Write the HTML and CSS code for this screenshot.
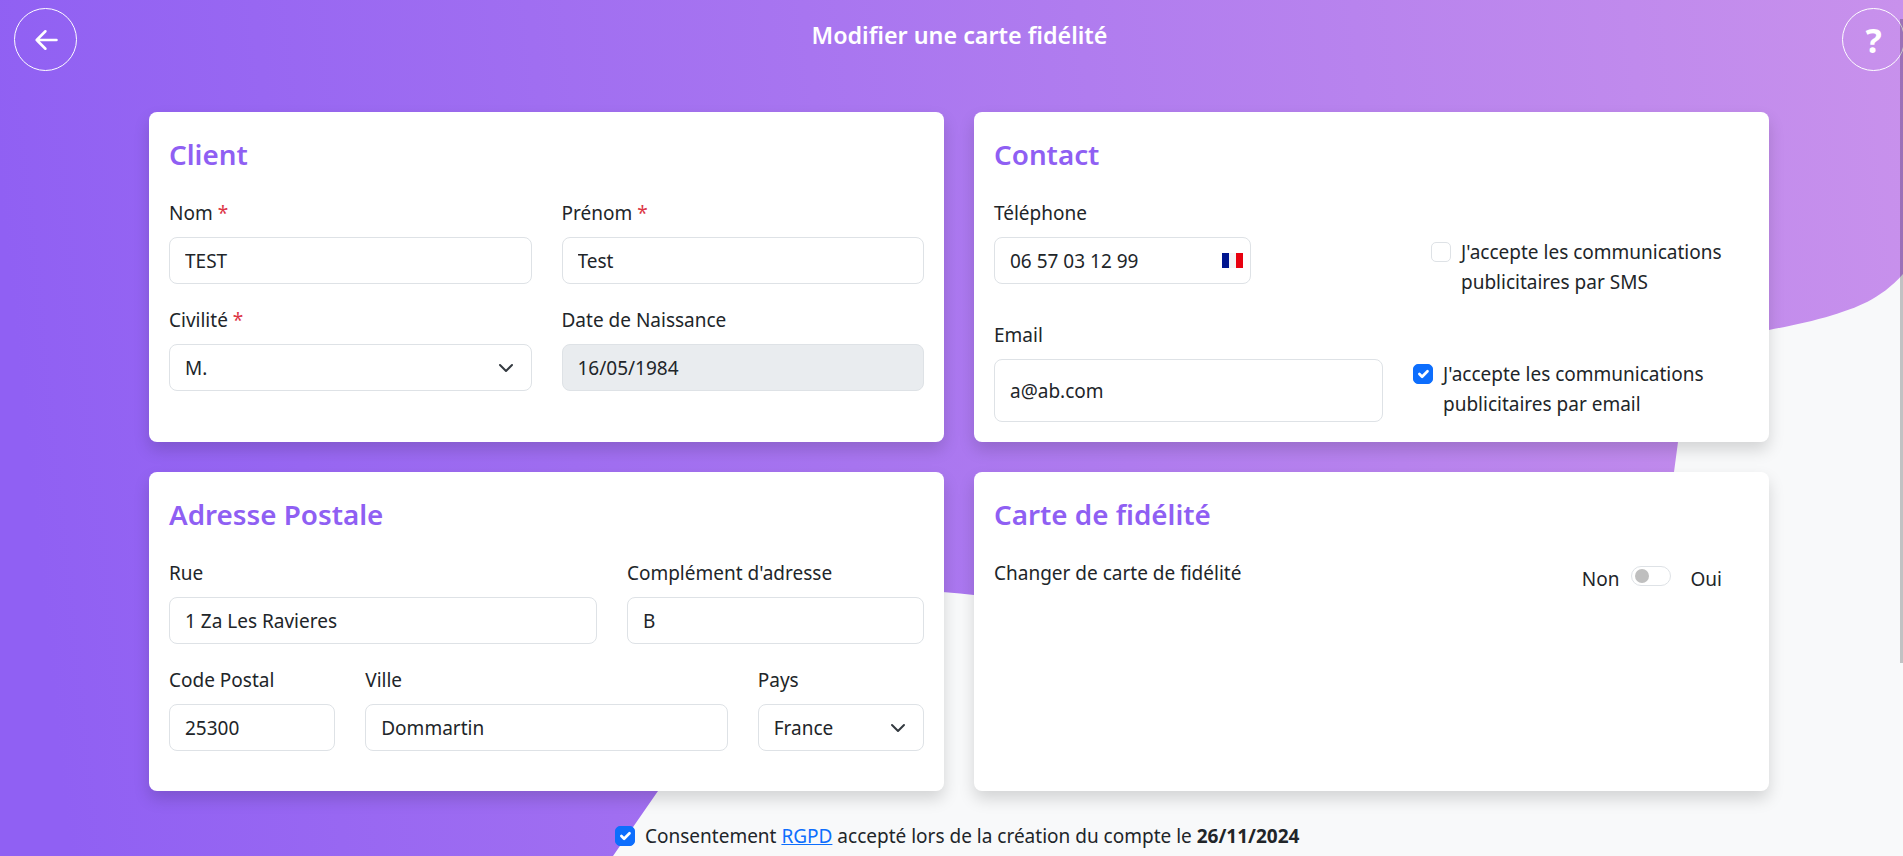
FILE: index.html
```html
<!DOCTYPE html>
<html lang="fr">
<head>
    <meta charset="utf-8">
    <title>Modifier une carte fidélité</title>
    <link rel="stylesheet" href="styles.css">
</head>
<body>
    <!-- decorative background -->
    <svg class="blob" width="1903" height="856" viewBox="0 0 1903 856">
        <defs>
            <linearGradient id="violet" gradientUnits="userSpaceOnUse" x1="0" y1="200" x2="1903" y2="0">
                <stop offset="0" stop-color="#9060f3"/>
                <stop offset="1" stop-color="#c891ec"/>
            </linearGradient>
        </defs>
        <path fill="url(#violet)" d="M0 0H1903V274C1880 300 1855 308 1833 315C1810 322 1790 326 1769 330C1705 344 1690 390 1678 442L1674 472C1660 540 1300 630 974 595C900 586 800 590 740 650C700 690 680 740 658 791L613 856H0Z"/>
    </svg>
    <div class="scrollbar"></div>

    <header class="topbar">
        <button class="round-btn" type="button" aria-label="Retour">
            <svg width="28" height="28" viewBox="0 0 24 24" fill="none" stroke="#fff" stroke-width="2.2" stroke-linecap="round" stroke-linejoin="round"><path d="M21 12H4M11.500 4.500L4 12l7.500 7.500"/></svg>
        </button>
        <h1 class="page-title">Modifier une carte fidélité</h1>
        <button class="round-btn help" type="button">?</button>
    </header>

    <main class="cards">
        <section class="card card-top">
            <h2>Client</h2>
            <div class="row">
                <div class="field c6"><label>Nom <span class="req">*</span></label><input class="ctl" type="text" value="TEST"></div>
                <div class="field c6"><label>Prénom <span class="req">*</span></label><input class="ctl" type="text" value="Test"></div>
                <div class="field c6"><label>Civilité <span class="req">*</span></label><select class="ctl"><option>M.</option></select></div>
                <div class="field c6"><label>Date de Naissance</label><input class="ctl" type="text" value="16/05/1984" disabled></div>
            </div>
        </section>

        <section class="card card-top">
            <h2>Contact</h2>
            <div class="contact">
                <div class="field">
                    <label>Téléphone</label>
                    <div class="phone">
                        <input class="ctl" type="text" value="06 57 03 12 99">
                        <svg class="flag" width="21" height="15" viewBox="0 0 21 15"><rect width="7" height="15" fill="#00158f"/><rect x="7" width="7" height="15" fill="#f4f4f6"/><rect x="14" width="7" height="15" fill="#e8000f"/></svg>
                    </div>
                </div>
                <label class="check sms"><input type="checkbox"><span>J'accepte les communications publicitaires par SMS</span></label>
                <div class="field email">
                    <label>Email</label>
                    <input class="ctl tall" type="text" value="a@ab.com">
                </div>
                <label class="check"><input type="checkbox" checked><span>J'accepte les communications publicitaires par email</span></label>
            </div>
        </section>

        <section class="card card-bottom">
            <h2>Adresse Postale</h2>
            <div class="row">
                <div class="field c7"><label>Rue</label><input class="ctl" type="text" value="1 Za Les Ravieres"></div>
                <div class="field c5"><label>Complément d'adresse</label><input class="ctl" type="text" value="B"></div>
                <div class="field c3"><label>Code Postal</label><input class="ctl" type="text" value="25300"></div>
                <div class="field c6"><label>Ville</label><input class="ctl" type="text" value="Dommartin"></div>
                <div class="field c3"><label>Pays</label><select class="ctl"><option>France</option></select></div>
            </div>
        </section>

        <section class="card card-bottom">
            <h2>Carte de fidélité</h2>
            <div class="change">
                <span>Changer de carte de fidélité</span>
                <div class="toggle">
                    <span>Non</span>
                    <span class="switch"></span>
                    <span>Oui</span>
                </div>
            </div>
        </section>
    </main>

    <p class="consent"><input type="checkbox" checked><span>Consentement <a href="#">RGPD</a> accepté lors de la création du compte le <b>26/11/2024</b></span></p>
</body>
</html>
```

FILE: styles.css
```css
* {
    box-sizing: border-box;
}

html, body {
    height: 856px;
    overflow: hidden;
}

body {
    position: relative;
    margin: 0;
    background-color: #f8f9fa;
    color: #212529;
    font-family: "Noto Sans", "Open Sans", sans-serif;
    font-size: 19px;
}

.blob {
    position: absolute;
    top: 0;
    left: 0;
}

.scrollbar {
    position: absolute;
    top: 19px;
    right: 0;
    width: 3px;
    height: 644px;
    background-color: rgba(0, 0, 0, 0.22);
    z-index: 2;
}

.topbar {
    position: relative;
    display: flex;
    justify-content: space-between;
    align-items: flex-start;
    height: 112px;
    padding: 8px 0 0 14px;
}

.round-btn {
    display: flex;
    justify-content: center;
    align-items: center;
    flex: none;
    width: 63px;
    height: 63px;
    padding: 0;
    border: 1px solid #fff;
    border-radius: 50%;
    background: none;
    color: #fff;
}

.help {
    margin-right: -2px;
    font-family: "Noto Sans", sans-serif;
    font-size: 34px;
    font-weight: 700;
}

.page-title {
    flex: 1;
    margin: 11px 0 0;
    color: #fff;
    font-size: 23.3px;
    line-height: 32px;
    font-weight: 600;
    text-align: center;
}

.cards {
    position: relative;
    display: grid;
    grid-template-columns: 795px 795px;
    grid-template-rows: 330px 319px;
    gap: 30px;
    padding-left: 149px;
}

.card {
    padding: 20px;
    background-color: #fff;
    border-radius: 8px;
    box-shadow: 0 8px 16px rgba(0, 0, 0, 0.15);
}

.card h2 {
    margin: 0 0 25px;
    color: #8f5ff3;
    font-size: 27.8px;
    line-height: 45px;
    font-weight: 600;
}

.row {
    display: grid;
    grid-template-columns: repeat(12, 1fr);
    column-gap: 30px;
    row-gap: 25px;
}

.c3 { grid-column: span 3; }
.c5 { grid-column: span 5; }
.c6 { grid-column: span 6; }
.c7 { grid-column: span 7; }

.field label {
    display: block;
    height: 24px;
    margin-bottom: 11px;
    line-height: 22px;
}

.req {
    color: #dc3545;
}

.ctl {
    display: block;
    width: 100%;
    height: 47px;
    padding: 0 15px;
    border: 1px solid #dee2e6;
    border-radius: 8px;
    background-color: #fff;
    color: #212529;
    font-family: inherit;
    font-size: 19px;
}

.ctl:disabled {
    background-color: #e9ecef;
    opacity: 1;
}

select.ctl {
    appearance: none;
    background-image: url("data:image/svg+xml,%3csvg xmlns='http://www.w3.org/2000/svg' viewBox='0 0 16 16'%3e%3cpath fill='none' stroke='%23343a40' stroke-linecap='round' stroke-linejoin='round' stroke-width='2' d='m2 5 6 6 6-6'/%3e%3c/svg%3e");
    background-repeat: no-repeat;
    background-position: right 17px center;
    background-size: 16px 16px;
}

.contact {
    display: grid;
    grid-template-columns: 389px 1fr;
    column-gap: 30px;
    row-gap: 27px;
}

.phone {
    position: relative;
    width: 257px;
}

.flag {
    position: absolute;
    top: 16px;
    right: 8px;
}

.tall {
    height: 63px;
}

.check {
    display: flex;
    gap: 10px;
    margin-top: 35px;
    line-height: 30px;
}

.sms {
    padding-left: 18px;
}

input[type="checkbox"] {
    flex: none;
    width: 20px;
    height: 20px;
    margin: 5px 0 0;
    appearance: none;
    border: 1px solid #dee2e6;
    border-radius: 5px;
    background-color: #fff;
}

input[type="checkbox"]:checked {
    border-color: #0d6efd;
    background-color: #0d6efd;
    background-image: url("data:image/svg+xml,%3csvg xmlns='http://www.w3.org/2000/svg' viewBox='0 0 20 20'%3e%3cpath fill='none' stroke='%23fff' stroke-linecap='round' stroke-linejoin='round' stroke-width='3' d='m6 10 3 3 6-6'/%3e%3c/svg%3e");
}

.change {
    display: flex;
    justify-content: space-between;
    line-height: 22px;
}

.toggle {
    display: flex;
    align-items: center;
    gap: 11px;
    height: 24px;
    margin: 5px 27px 0 0;
}

.switch {
    position: relative;
    width: 40px;
    height: 20px;
    margin: -6px 9px 0 0;
    border: 1px solid #dee2e6;
    border-radius: 10px;
}

.switch::before {
    content: "";
    position: absolute;
    top: 2px;
    left: 3px;
    width: 14px;
    height: 14px;
    border-radius: 50%;
    background-color: #bfbfbf;
}

.consent {
    position: relative;
    display: flex;
    gap: 10px;
    margin: 30px 0 0 615px;
    line-height: 30px;
}

.consent a {
    color: #0d6efd;
}
```
